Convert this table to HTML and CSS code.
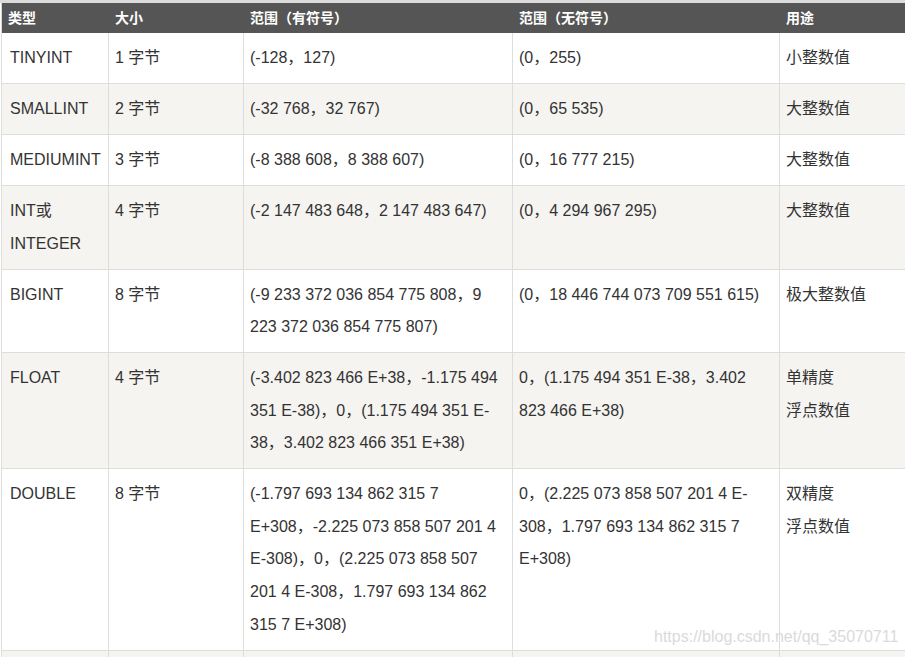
FILE: index.html
```html
<!DOCTYPE html>
<html lang="zh-CN">
<head>
<meta charset="utf-8">
<title>MySQL 数值类型</title>
<link rel="stylesheet" href="styles.css">
</head>
<body>
<div class="page">
  <div class="top-strip"></div>
  <table class="types">
    <colgroup>
      <col class="c1"><col class="c2"><col class="c3"><col class="c4"><col class="c5">
    </colgroup>
    <thead>
      <tr><th>类型</th><th>大小</th><th>范围（有符号）</th><th>范围（无符号）</th><th>用途</th></tr>
    </thead>
    <tbody>
      <tr><td>TINYINT</td><td>1 字节</td><td>(-128，127)</td><td>(0，255)</td><td>小整数值</td></tr>
      <tr><td>SMALLINT</td><td>2 字节</td><td>(-32 768，32 767)</td><td>(0，65 535)</td><td>大整数值</td></tr>
      <tr><td>MEDIUMINT</td><td>3 字节</td><td>(-8 388 608，8 388 607)</td><td>(0，16 777 215)</td><td>大整数值</td></tr>
      <tr><td>INT或<br>INTEGER</td><td>4 字节</td><td>(-2 147 483 648，2 147 483 647)</td><td>(0，4 294 967 295)</td><td>大整数值</td></tr>
      <tr><td>BIGINT</td><td>8 字节</td><td>(-9 233 372 036 854 775 808，9<br>223 372 036 854 775 807)</td><td>(0，18 446 744 073 709 551 615)</td><td>极大整数值</td></tr>
      <tr><td>FLOAT</td><td>4 字节</td><td>(-3.402 823 466 E+38，-1.175 494<br>351 E-38)，0，(1.175 494 351 E-<br>38，3.402 823 466 351 E+38)</td><td>0，(1.175 494 351 E-38，3.402<br>823 466 E+38)</td><td>单精度<br>浮点数值</td></tr>
      <tr><td>DOUBLE</td><td>8 字节</td><td>(-1.797 693 134 862 315 7<br>E+308，-2.225 073 858 507 201 4<br>E-308)，0，(2.225 073 858 507<br>201 4 E-308，1.797 693 134 862<br>315 7 E+308)</td><td>0，(2.225 073 858 507 201 4 E-<br>308，1.797 693 134 862 315 7<br>E+308)</td><td>双精度<br>浮点数值</td></tr>
      <tr class="cut"><td></td><td></td><td></td><td></td><td></td></tr>
    </tbody>
  </table>
  <div class="watermark">https://blog.csdn.net/qq_35070711</div>
</div>
</body>
</html>
```

FILE: styles.css
```css
html, body {
  margin: 0;
  padding: 0;
  background: #ffffff;
  overflow: hidden;
}

.page {
  position: relative;
  width: 905px;
  height: 657px;
  overflow: hidden;
  font-family: "Liberation Sans", Arial, "Noto Sans CJK SC", sans-serif;
  color: #333333;
}

.top-strip {
  height: 3px;
  background: #dcdcdc;
}

.types {
  margin-left: 1px;
  width: 919px;
  table-layout: fixed;
  border-collapse: separate;
  border-spacing: 0;
}

.c1 { width: 107px; }
.c2 { width: 135px; }
.c3 { width: 269px; }
.c4 { width: 267px; }
.c5 { width: 141px; }

.types th {
  height: 30px;
  padding: 0 6px;
  background: #555555;
  color: #ffffff;
  font-size: 14px;
  font-weight: bold;
  line-height: 30px;
  text-align: left;
  border-left: 1px solid #555555;
  white-space: nowrap;
}

.types th:first-child {
  border-left-color: #d6d6d6;
}

.types td {
  padding: 9px 6px 8.4px 6px;
  font-size: 16px;
  line-height: 32.6px;
  vertical-align: top;
  text-align: left;
  border-left: 1px solid #dddddd;
  border-bottom: 1px solid #dddddd;
  white-space: nowrap;
}

.types td:first-child {
  padding-left: 8px;
}

.types tbody tr:nth-child(even) td {
  background: #f5f4f1;
}

.types tr.cut td {
  height: 20px;
}

.watermark {
  position: absolute;
  left: 654px;
  top: 627px;
  font-size: 16px;
  line-height: 20px;
  color: #dadada;
  white-space: nowrap;
}
```
